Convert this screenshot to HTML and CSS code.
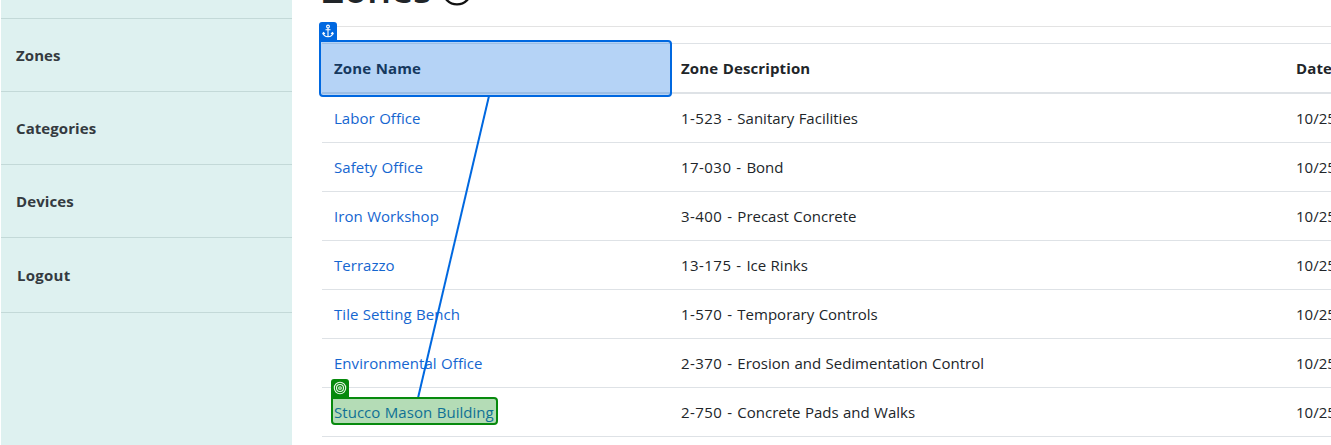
FILE: index.html
```
<!DOCTYPE html>
<html lang="en">
<head>
<meta charset="utf-8">
<title>Zones</title>
<link rel="stylesheet" href="styles.css">
</head>
<body>
<div class="page">
  <nav class="sidebar">
    <div class="spacer"></div>
    <a class="nav-item">Zones</a>
    <a class="nav-item">Categories</a>
    <a class="nav-item">Devices</a>
    <a class="nav-item nav-logout">Logout</a>
  </nav>
  <main class="content">
    <header class="heading">
      <h1>Zones</h1>
      <svg class="heading-icon" width="32" height="32" viewBox="0 0 32 32"><circle cx="16" cy="16" r="14.300" fill="none" stroke="#111" stroke-width="2.200"/></svg>
    </header>
    <div class="table">
      <div class="row head"><span>Zone Name</span><span>Zone Description</span><span>Date</span></div>
      <div class="row"><a>Labor Office</a><span><span class="code">1-523 - </span>Sanitary Facilities</span><span>10/25</span></div>
      <div class="row"><a>Safety Office</a><span><span class="code">17-030 - </span>Bond</span><span>10/25</span></div>
      <div class="row"><a>Iron Workshop</a><span><span class="code">3-400 - </span>Precast Concrete</span><span>10/25</span></div>
      <div class="row"><a>Terrazzo</a><span><span class="code">13-175 - </span>Ice Rinks</span><span>10/25</span></div>
      <div class="row"><a>Tile Setting Bench</a><span><span class="code">1-570 - </span>Temporary Controls</span><span>10/25</span></div>
      <div class="row"><a>Environmental Office</a><span><span class="code">2-370 - </span>Erosion and Sedimentation Control</span><span>10/25</span></div>
      <div class="row"><a>Stucco Mason Building</a><span><span class="code">2-750 - </span>Concrete Pads and Walks</span><span>10/25</span></div>
    </div>
  </main>
  <svg class="connector" width="1331" height="445" viewBox="0 0 1331 445"><path d="M489 96 418 398" stroke="#0068e0" stroke-width="2"/></svg>
  <div class="mark anchor-box"></div>
  <div class="badge anchor-badge">
    <svg width="18" height="20" viewBox="0 0 18 20" fill="none" stroke="#fff" stroke-width="1.1"><circle cx="9" cy="4.500" r="1.400"/><path d="M9 6v9M6.500 7.700h5M4.200 10.500c.2 2.900 2 4.300 4.800 4.300s4.600-1.400 4.800-4.300M3.500 12.200l.9-1.700 1.600 1.200M14.500 12.200l-.9-1.700-1.600 1.200"/></svg>
  </div>
  <div class="mark target-box"></div>
  <div class="badge target-badge">
    <svg width="18" height="20" viewBox="0 0 18 20" fill="none" stroke="#e8f5e8" stroke-width="1.1"><circle cx="9" cy="9" r="5.700"/><circle cx="9" cy="9" r="3.500"/><circle cx="9" cy="9" r="1.300"/></svg>
  </div>
</div>
</body>
</html>
```
FILE: styles.css
```
* { box-sizing: border-box; }
body { margin: 0; background: #fff; color: #212529; font: 15px/24px "Open Sans", "Noto Sans", sans-serif; }
.page { position: relative; display: flex; width: 1331px; height: 445px; overflow: hidden; }
.sidebar { width: 291px; margin-left: 1px; flex: none; background: #def1f0; }
.spacer { height: 19px; border-bottom: 1px solid #c3d9d8; }
.nav-item { display: flex; align-items: center; height: 73px; padding: 0 15px; border-bottom: 1px solid #c3d9d8; color: #343a40; font-weight: 700; letter-spacing: .08px; }
.nav-logout { height: 75px; padding-left: 16px; letter-spacing: .25px; }
.content { flex: none; width: 1009px; margin-left: 30px; }
.heading { display: flex; height: 27px; border-bottom: 1px solid #e3e3e3; }
h1 { margin: -36.5px 0 0; font-size: 38px; line-height: 48px; font-weight: 600; width: 119px; }
.heading-icon { margin-top: -26px; flex: none; }
.table { margin-top: 16px; }
.row { display: grid; grid-template-columns: 347px 615px 100px; width: 1062px; height: 49px; align-items: center; padding-left: 12px; border-bottom: 1px solid #dee2e6; white-space: nowrap; word-spacing: .5px; }
.row a { color: #1566d0; letter-spacing: .04px; }
.code { letter-spacing: .45px; }
.head { height: 51px; border-top: 1px solid #dee2e6; border-bottom: 2px solid #dee2e6; font-weight: 700; letter-spacing: .12px; }
.connector { position: absolute; left: 0; top: 0; }
.mark { position: absolute; border: 2px solid #0068e0; border-radius: 1px 4px 4px 4px; }
.anchor-box { left: 319px; top: 40px; width: 353px; height: 57px; background: rgba(0, 104, 224, .29); }
.target-box { left: 331px; top: 397px; width: 167px; height: 28px; border-color: #078a0d; background: rgba(7, 138, 13, .3); }
.badge { position: absolute; width: 18px; height: 20px; border-radius: 3px 3px 0 0; }
.badge svg { display: block; }
.anchor-badge { left: 319px; top: 22px; background: #0068e0; }
.target-badge { left: 331px; top: 379px; background: #078a0d; }
```
